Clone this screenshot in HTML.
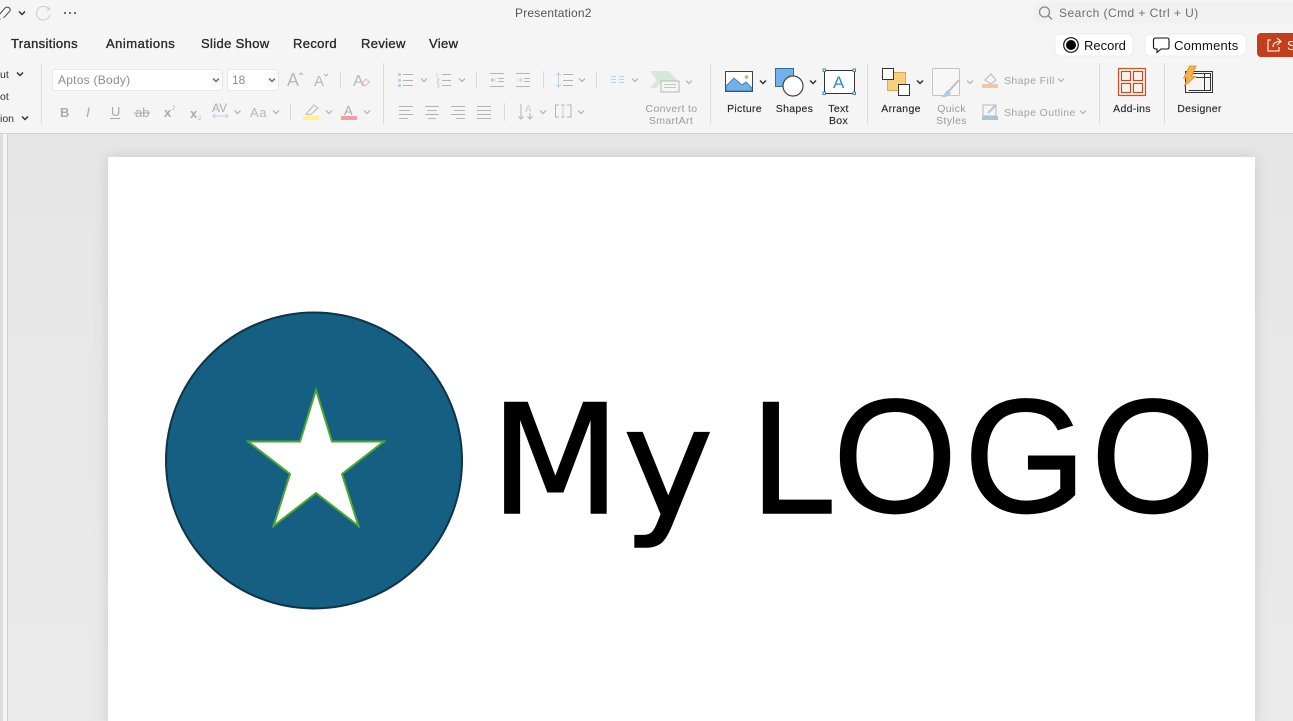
<!DOCTYPE html>
<html><head><meta charset="utf-8"><style>
html,body{margin:0;padding:0;width:1293px;height:721px;overflow:hidden;background:#e9e9e9}
svg{display:block;position:absolute;left:0;top:0}
text{font-family:"Liberation Sans",sans-serif}
.tab{font-size:13px;fill:#2a2a2a;stroke:#2a2a2a;stroke-width:.35px;letter-spacing:.35px}
.lb{font-size:10.5px;fill:#2b2b2b;letter-spacing:.3px;text-anchor:middle;stroke:#2b2b2b;stroke-width:.15px}
.dl{font-size:10.5px;fill:#9b9b9b;letter-spacing:.35px;text-anchor:middle}
.gl{font-size:10.5px;fill:#a3a3a3;letter-spacing:.4px}
.sep{stroke:#dcdcdc;stroke-width:1}
.ln{stroke:#b4b4b4;stroke-width:1;fill:none}
.bl{stroke:#b5d3ea;stroke-width:1;fill:none}
.big{font-family:"DejaVu Sans",sans-serif;font-size:150px;fill:#000;stroke:#000;stroke-width:1.5px}
.big2{font-family:"Liberation Sans",sans-serif;font-size:162px;fill:#000;stroke:#000;stroke-width:1.5px}
</style></head><body>
<svg width="1293" height="721" viewBox="0 0 1293 721" xmlns="http://www.w3.org/2000/svg">
<defs>
<path id="c" d="M-3-1.500L0 1.500L3-1.500" fill="none" stroke="#b0b0b0" stroke-width="1.2"/>
<path id="d" d="M-3-1.500L0 1.500L3-1.500" fill="none" stroke="#333" stroke-width="1.5"/>
<linearGradient id="bg" x1="0" y1="0" x2="0" y2="1"><stop offset="0" stop-color="#e6e6e6"/><stop offset="1" stop-color="#eaeaea"/></linearGradient>
</defs>
<!-- workspace -->
<rect x="0" y="134" width="1293" height="587" fill="url(#bg)"/>
<rect x="0" y="134" width="3" height="587" fill="#dedede"/>
<rect x="3" y="134" width="4" height="587" fill="#f5f5f5"/>
<rect x="7" y="134" width="1" height="587" fill="#cfcfcf"/>
<rect x="108" y="157" width="1147" height="570" fill="#fff" style="filter:drop-shadow(0 0 7px rgba(0,0,0,.13))"/>
<!-- ribbon -->
<rect x="0" y="0" width="1293" height="133" fill="#f5f5f5"/>
<rect x="0" y="133" width="1293" height="1" fill="#d2d2d2"/>
<!-- title bar -->
<path d="M0 20L-1 15L5 8C7.500 6 11 8 10 11L3.500 18" fill="none" stroke="#555" stroke-width="1.1"/>
<use href="#d" x="22" y="13"/>
<path d="M49 9.500A6.800 6.800 0 1 0 50 14.500M49.500 6.500V10H46" fill="none" stroke="#cfcfcf" stroke-width="1.1"/>
<circle cx="65" cy="13" r="1" fill="#444"/><circle cx="70" cy="13" r="1" fill="#444"/><circle cx="75" cy="13" r="1" fill="#444"/>
<text x="515" y="17" font-size="12" fill="#555" letter-spacing=".2">Presentation2</text>
<rect x="1033" y="2" width="270" height="21" rx="5" fill="#f1f1f1"/>
<circle cx="1044.500" cy="12" r="5" fill="none" stroke="#888" stroke-width="1.3"/><path d="M1048 15.500L1052 19.500" stroke="#888" stroke-width="1.4"/>
<text x="1059" y="17" font-size="12" fill="#6f6f6f" letter-spacing=".45">Search (Cmd + Ctrl + U)</text>
<!-- tabs -->
<text class="tab" x="11" y="48">Transitions</text>
<text class="tab" x="106" y="48" style="letter-spacing:.5px">Animations</text>
<text class="tab" x="201" y="48">Slide Show</text>
<text class="tab" x="293" y="48">Record</text>
<text class="tab" x="361" y="48">Review</text>
<text class="tab" x="429" y="48">View</text>
<!-- right buttons -->
<rect x="1055" y="34" width="78" height="22" rx="5" fill="#fff" stroke="#ececec"/>
<circle cx="1071" cy="45" r="7.300" fill="#fff" stroke="#111" stroke-width="1.2"/><circle cx="1071" cy="45" r="5" fill="#000"/>
<text x="1084" y="50" font-size="13" fill="#111">Record</text>
<rect x="1145" y="34" width="101" height="22" rx="5" fill="#fff" stroke="#ececec"/>
<path d="M1156 38H1167Q1169 38 1169 40V47Q1169 49 1167 49H1161L1157 52.500V49H1156Q1153.500 49 1153.500 47V40Q1153.500 38 1156 38Z" fill="none" stroke="#111" stroke-width="1.1"/>
<text x="1174" y="50" font-size="13" fill="#111" letter-spacing=".2">Comments</text>
<rect x="1257" y="33" width="50" height="24" rx="4" fill="#c43e1c"/>
<path d="M1271 40H1268V51H1279V47M1273 47C1273 43 1276 41.500 1280 41.500M1277 38L1281 41.500L1277 45" fill="none" stroke="#fff" stroke-width="1.1"/>
<text x="1287" y="50" font-size="13" fill="#fff">S</text>
<!-- left cut -->
<text x="0" y="78" font-size="10.5" fill="#333">ut</text><use href="#d" x="20" y="74"/>
<text x="0" y="100" font-size="10.5" fill="#333">ot</text>
<text x="0" y="122" font-size="10.5" fill="#333">ion</text><use href="#d" x="25" y="118"/>
<line class="sep" x1="41.500" y1="63" x2="41.500" y2="124"/>
<!-- font -->
<rect x="52.500" y="69.500" width="170" height="21" rx="3" fill="#fff" stroke="#e8e8e8"/>
<text x="58" y="84" font-size="12" fill="#8d8d8d" letter-spacing=".25">Aptos (Body)</text><use href="#d" x="216" y="80" opacity=".7"/>
<rect x="227.500" y="69.500" width="51" height="21" rx="3" fill="#fff" stroke="#e8e8e8"/>
<text x="232" y="84" font-size="12" fill="#8d8d8d">18</text><use href="#d" x="272" y="80" opacity=".7"/>
<text x="287" y="86" font-size="18" fill="#b8b8b8">A</text><path d="M299 75L301 73L303 75" class="ln"/>
<text x="314" y="86" font-size="15" fill="#b8b8b8">A</text><path d="M324 74L326 76L328 74" class="ln"/>
<line class="sep" x1="340.500" y1="71" x2="340.500" y2="88"/>
<text x="353" y="86" font-size="16" fill="#b8b8b8">A</text><path d="M362 83L366 79L369.500 82L365 86Z" fill="none" stroke="#e0b6be"/>
<line class="sep" x1="383.500" y1="63" x2="383.500" y2="124"/>
<!-- font row 2 -->
<text x="60" y="117" font-size="13" font-weight="bold" fill="#ababab">B</text>
<text x="86" y="117" font-size="14" font-style="italic" fill="#ababab">I</text>
<text x="111" y="116" font-size="13" fill="#ababab">U</text><line x1="110" y1="118.500" x2="120" y2="118.500" stroke="#ababab"/>
<text x="135" y="117" font-size="13" fill="#ababab">ab</text><line x1="134" y1="113" x2="150" y2="113" stroke="#ababab"/>
<text x="164" y="117" font-size="13" font-weight="bold" fill="#ababab">x</text><text x="172" y="110" font-size="6" fill="#b5b5b5">2</text>
<text x="190" y="118" font-size="13" font-weight="bold" fill="#ababab">x</text><text x="198" y="120" font-size="6" fill="#b5b5b5">2</text>
<text x="212" y="112" font-size="12" fill="#adadad">AV</text><path d="M213 116H228M215 114L213 116L215 118M226 114L228 116L226 118" class="bl"/>
<use href="#c" x="237.500" y="112"/>
<text x="250" y="117" font-size="13" fill="#b8b8b8" letter-spacing=".6">Aa</text><use href="#c" x="276" y="112"/>
<line class="sep" x1="290.500" y1="103" x2="290.500" y2="121"/>
<path d="M306 114L314 105L318 108L310 115Z" fill="none" stroke="#b8b8b8"/><rect x="303" y="116" width="16" height="4" fill="#fbf38d"/>
<use href="#c" x="329" y="112"/>
<text x="344" y="115" font-size="13" fill="#ababab">A</text><rect x="341" y="116" width="16" height="4" fill="#f0a0a0"/>
<use href="#c" x="367" y="112"/>
<!-- lists -->
<rect x="398" y="73" width="3" height="3" fill="#b5d3ea"/><rect x="398" y="79" width="3" height="3" fill="#b5d3ea"/><rect x="398" y="84" width="3" height="3" fill="#b5d3ea"/>
<path d="M403 74.500H413M403 80.500H413M403 85.500H413" class="ln"/><use href="#c" x="424" y="80"/>
<path d="M437 73V77M437 79H439L437 82H439M437 84H439V87H437" class="bl"/>
<path d="M442 74.500H451M442 80.500H451M442 85.500H451" class="ln"/><use href="#c" x="462" y="80"/>
<line class="sep" x1="476.500" y1="71" x2="476.500" y2="88"/>
<path d="M490 73.500H504M498 78.500H504M498 81.500H504M490 86.500H504" class="ln"/><path d="M496 80H491M493 78L491 80L493 82" stroke="#e0b6a6" fill="none"/>
<path d="M516 73.500H530M524 78.500H530M524 81.500H530M516 86.500H530" class="ln"/><path d="M517 80H522M520 78L522 80L520 82" stroke="#b8dcb8" fill="none"/>
<line class="sep" x1="543.500" y1="71" x2="543.500" y2="88"/>
<path d="M558.500 73V87M556 75.500L558.500 73L561 75.500M556 84.500L558.500 87L561 84.500" class="bl"/>
<path d="M563 74.500H573M563 80.500H573M563 85.500H573" class="ln"/><use href="#c" x="582" y="80"/>
<line class="sep" x1="596.500" y1="71" x2="596.500" y2="88"/>
<path d="M611 76.500H616M611 79.500H616M611 82.500H616M619 76.500H624M619 79.500H624M619 82.500H624" class="bl"/><use href="#c" x="635" y="80"/>
<path d="M650 71H669L678 81H662L656 88H650L657 80Z" fill="#d6e8d6"/>
<rect x="661" y="81" width="18" height="11" fill="#f5f5f5" stroke="#b8b8b8"/><path d="M664 84.500H676M664 87.500H676" stroke="#c4c4c4"/>
<use href="#c" x="689" y="82"/>
<text class="dl" x="671.500" y="112">Convert to</text>
<text class="dl" x="671" y="124">SmartArt</text>
<!-- align -->
<path d="M399 106.500H413M399 110.500H410M399 114.500H413M399 118.500H408" class="ln"/>
<path d="M425 106.500H439M427 110.500H437M425 114.500H439M428 118.500H436" class="ln"/>
<path d="M451 106.500H465M454 110.500H465M451 114.500H465M456 118.500H465" class="ln"/>
<path d="M477 106.500H491M477 110.500H491M477 114.500H491M477 118.500H491" class="ln"/>
<line class="sep" x1="504.500" y1="103" x2="504.500" y2="121"/>
<path d="M521 104V119M518.500 116.500L521 119L523.500 116.500M530 113V119M527.500 116.500L530 119L532.500 116.500" class="ln"/>
<text x="525" y="112" font-size="10" fill="#b5d3ea">A</text><use href="#c" x="543" y="112"/>
<path d="M559 105H555.500V117H559M567 105H571V117H567" class="ln"/><path d="M563 104V118M561 106L563 104L565 106M561 116L563 118L565 116" class="bl"/>
<use href="#c" x="581" y="112"/>
<line class="sep" x1="710.500" y1="63" x2="710.500" y2="124"/>
<!-- picture -->
<rect x="725.500" y="71.500" width="27" height="20" fill="#fff" stroke="#2f4858"/>
<path d="M726 91V86L734 78L742 85L746 82L752 88V91Z" fill="#6fb1e8" stroke="#2f6f9f" stroke-width=".8"/><circle cx="746.500" cy="77" r="1.800" fill="#e8a44a"/>
<use href="#d" x="763" y="82"/>
<text class="lb" x="744.500" y="112">Picture</text>
<!-- shapes -->
<rect x="775.500" y="68.500" width="18" height="18" fill="#6fb1e8" stroke="#2f6f9f"/>
<circle cx="793" cy="86" r="10" fill="#fff" stroke="#444" stroke-width="1.200"/>
<use href="#d" x="813" y="82"/>
<text class="lb" x="794.500" y="112">Shapes</text>
<!-- textbox -->
<rect x="824.500" y="70.500" width="30" height="23" fill="#fff" stroke="#333"/>
<g fill="#fff" stroke="#2e8bc9"><rect x="823" y="69" width="2.500" height="2.500"/><rect x="853" y="69" width="2.500" height="2.500"/><rect x="823" y="92" width="2.500" height="2.500"/><rect x="853" y="92" width="2.500" height="2.500"/></g>
<text x="833" y="88" font-size="17" fill="#2e8bc9">A</text>
<text class="lb" x="838.500" y="112">Text</text>
<text class="lb" x="838.500" y="124">Box</text>
<line class="sep" x1="867.500" y1="63" x2="867.500" y2="124"/>
<!-- arrange -->
<rect x="887.500" y="72.500" width="18" height="18" fill="#f7cf7d" stroke="#dba94a"/>
<rect x="882.500" y="68.500" width="11" height="11" fill="#fff" stroke="#333"/>
<rect x="898.500" y="84.500" width="11" height="11" fill="#fff" stroke="#333"/>
<use href="#d" x="920" y="82"/>
<text class="lb" x="901" y="112">Arrange</text>
<!-- quick styles -->
<rect x="932.500" y="68.500" width="27" height="27" rx="1" fill="#f7f7f7" stroke="#c4c4c4"/>
<path d="M959 80L948 92" stroke="#bdbdbd" stroke-width="2"/><path d="M941 97C944 96 945 91 948 90L951 93C949 96 945 98 941 97Z" fill="#a9cbe6"/>
<use href="#c" x="970" y="82"/>
<text class="dl" x="951.500" y="112">Quick</text>
<text class="dl" x="951.500" y="124">Styles</text>
<!-- shape fill / outline -->
<path d="M985 80L991 74L996 80L991 84Z" fill="#f5f5f5" stroke="#b8b8b8"/><rect x="982" y="84" width="16" height="4" fill="#f0c4ae"/>
<text class="gl" x="1004" y="84">Shape Fill</text><use href="#c" x="1061" y="80"/>
<rect x="983" y="105" width="13" height="11" fill="#f5f5f5" stroke="#b8b8b8"/><path d="M988 113L996 105" stroke="#a9cbe6" stroke-width="2"/><rect x="982" y="116" width="16" height="4" fill="#a9c6d2"/>
<text class="gl" x="1004" y="116">Shape Outline</text><use href="#c" x="1083" y="112"/>
<line class="sep" x1="1099.500" y1="63" x2="1099.500" y2="124"/>
<!-- add-ins -->
<rect x="1118.500" y="68.500" width="27" height="27" fill="#fbe6da" stroke="#c0562c" stroke-width="1.200"/>
<rect x="1121.500" y="71.500" width="9" height="9" fill="#f7f2ee" stroke="#b5502a" stroke-width="1.100"/><rect x="1133.500" y="71.500" width="9" height="9" fill="#f7f2ee" stroke="#b5502a" stroke-width="1.100"/>
<rect x="1121.500" y="83.500" width="9" height="9" fill="#f7f2ee" stroke="#b5502a" stroke-width="1.100"/><rect x="1133.500" y="83.500" width="9" height="9" fill="#f7f2ee" stroke="#b5502a" stroke-width="1.100"/>
<text class="lb" x="1132" y="112">Add-ins</text>
<line class="sep" x1="1164.500" y1="63" x2="1164.500" y2="124"/>
<!-- designer -->
<rect x="1185.500" y="71.500" width="27" height="21" fill="#f5f5f5" stroke="#333"/>
<path d="M1188.500 73.500H1210.500V90.500H1188.500M1204.500 74V90M1196 77.500H1210" fill="none" stroke="#333"/>
<path d="M1189.500 66H1196L1191.500 76.500H1195.500L1184 86.500L1187.500 78H1183.500Z" fill="#f7b04a" stroke="#d98a20" stroke-width=".7"/>
<text class="lb" x="1199.500" y="112">Designer</text>
<!-- slide content -->
<circle cx="314" cy="460.500" r="148" fill="#156082" stroke="#0e3446" stroke-width="2"/>
<path d="M316 390L332 441.500H384L342 474L358.500 526L316 493L273.500 526L290 474L248 441.500H300Z" fill="#fff" stroke="#4ea72e" stroke-width="2"/>
<text class="big" transform="translate(490 513) scale(1.01 1.01)" x="0" y="0">M</text>
<text class="big" transform="translate(623 515.500) scale(1.02 1.01)" x="0" y="0">y</text>
<text class="big" transform="translate(749 513) scale(.99 1.01)" x="0" y="0">L</text>
<text class="big2" transform="translate(833 512) scale(.985 1)" x="0" y="0">O</text>
<text class="big2" transform="translate(964 512) scale(.97 1)" x="0" y="0">G</text>
<text class="big2" transform="translate(1091 512) scale(.985 1)" x="0" y="0">O</text>
</svg>
</body></html>
